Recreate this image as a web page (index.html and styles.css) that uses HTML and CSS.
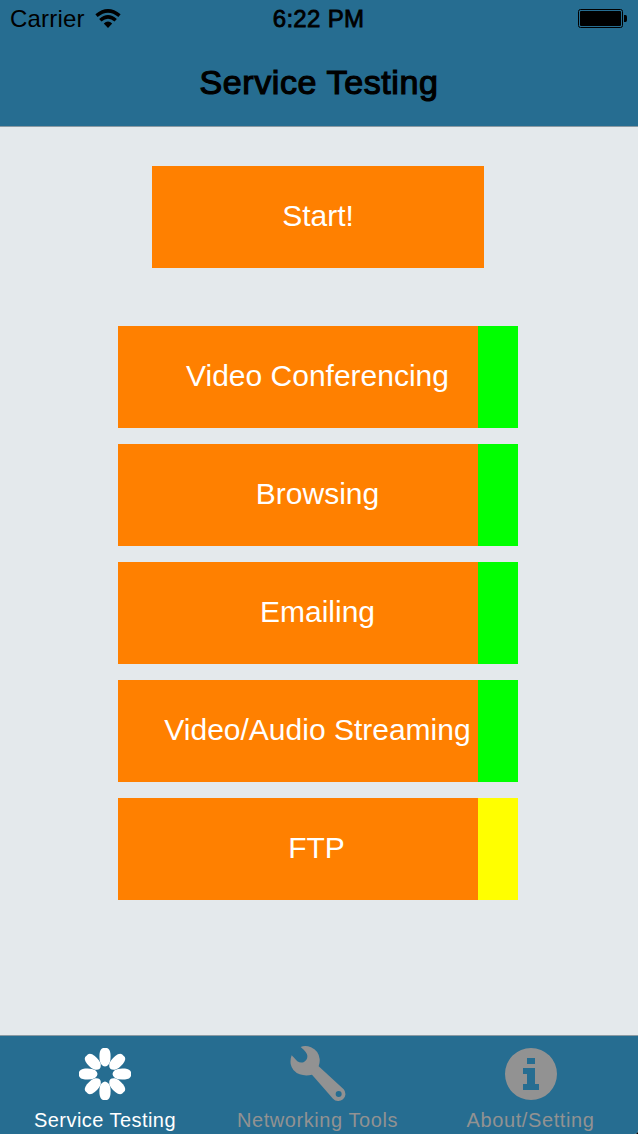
FILE: index.html
```html
<!DOCTYPE html>
<html lang="en">
<head>
<meta charset="utf-8">
<title>Service Testing</title>
<link rel="stylesheet" href="styles.css">
</head>
<body>
<div class="app">
  <header class="header">
    <div class="status">
      <div class="carrier"><span class="carrier-name">Carrier</span>
        <svg class="wifi" width="26" height="20" viewBox="0 0 26 20"><g fill="none" stroke="#000" stroke-width="3.500"><path d="M1.500 6.700Q13 -2.900 24.500 6.700"/><path d="M5.300 11.200Q13 4.500 20.700 11.200"/></g><path d="M8.800 14.600Q13 10.600 17.200 14.600L13 19Z"/></svg>
      </div>
      <div class="time">6:22 PM</div>
      <svg class="battery" width="50" height="20" viewBox="0 0 50 20"><rect x=".5" y=".5" width="44" height="18" rx="2" fill="none" stroke="#000"/><rect x="2" y="2" width="41" height="15" rx="1"/><path d="M46 6h1.500q1.500 0 1.500 2v3q0 2-1.500 2H46Z"/></svg>
    </div>
    <h1 class="title">Service Testing</h1>
  </header>
  <main class="content">
    <button class="start">Start!</button>
    <div class="services">
      <button class="service"><span class="name">Video Conferencing</span></button>
      <button class="service"><span class="name">Browsing</span></button>
      <button class="service"><span class="name">Emailing</span></button>
      <button class="service"><span class="name">Video/Audio Streaming</span></button>
      <button class="service pending"><span class="name">FTP</span></button>
    </div>
  </main>
  <nav class="tabs">
    <a class="tab active">
      <svg class="icon" width="60" height="60" viewBox="-30 -30 60 60" fill="currentColor"><g id="pair"><path id="petal" d="M-2-26H2Q5-25 5.500-20Q6-13 4-10Q2-7.500 0-7.500T-4-10Q-6-13-5.500-20Q-5-25-2-26Z"/><use href="#petal" transform="rotate(180)"/></g><use href="#pair" transform="rotate(45)"/><use href="#pair" transform="rotate(90)"/><use href="#pair" transform="rotate(135)"/></svg>
      <span class="label service-label">Service Testing</span>
    </a>
    <a class="tab">
      <svg class="icon" width="60" height="60" viewBox="23 12 180 180" fill="currentColor"><path fill-rule="evenodd" d="M61 21Q75 15 92 22Q115 32 118 57Q119 69 115 79L190 148A20 20 0 1 1 158 176L95 104Q76 109 58 103Q35 94 31 72Q29 58 34 46L51 64Q61 70 71 66Q82 59 81 47Q80 37 61 21ZM175 153A9 9 0 1 0 175 171A9 9 0 1 0 175 153Z"/></svg>
      <span class="label network-label">Networking Tools</span>
    </a>
    <a class="tab">
      <svg class="icon" width="60" height="60" viewBox="-30 -30 60 60" fill="currentColor"><path fill-rule="evenodd" d="M0-26A26 26 0 1 1 0 26A26 26 0 1 1 0-26ZM-4-16V-10H4V-16ZM-8-6V0H-4V10H-8V16H8V10H4V-6Z"/></svg>
      <span class="label about-label">About/Setting</span>
    </a>
  </nav>
</div>
</body>
</html>
```
FILE: styles.css
```css
* { box-sizing: border-box; }
body { margin: 0; background: #000; font-family: "Liberation Sans", Arial, sans-serif; }
.app { width: 638px; height: 1134px; display: flex; flex-direction: column; background: #e4e9ec; border-bottom-right-radius: 4px; overflow: hidden; }
.header { height: 127px; background: #266d91; border-bottom: 1px solid #8a9aa3; color: #000; }
.status { height: 38px; display: grid; grid-template-columns: 1fr auto 1fr; padding: 0 10px; align-items: center; }
.carrier { display: flex; align-items: center; gap: 10px; }
.carrier-name { font-size: 24px; line-height: 38px; letter-spacing: .2px; }
.wifi { display: block; }
.time { font-size: 24px; line-height: 38px; letter-spacing: .3px; padding-right: 1px; -webkit-text-stroke: .8px #000; }
.battery { justify-self: end; }
.title { margin: 0; height: 88px; text-align: center; font-size: 34px; line-height: 89px; font-weight: 400; letter-spacing: .6px; -webkit-text-stroke: 1.2px #000; }
.content { flex: 1; display: flex; flex-direction: column; align-items: center; padding: 39px 2px 0 0; }
button { border: 0; border-radius: 0; padding: 0 0 2px; margin: 0; background: #ff8000; color: #fff; font: 30px/100px "Liberation Sans", Arial, sans-serif; height: 102px; text-align: center; white-space: nowrap; }
.start { width: 332px; }
.services { margin-top: 58px; display: flex; flex-direction: column; gap: 16px; }
.service { width: 400px; border-right: 40px solid #0f0; padding-left: 39px; }
.pending { border-right-color: #ff0; padding-left: 37px; }
.name { display: block; }
.tabs { height: 99px; border-top: 1px solid #8a9aa3; background: #266d91; display: grid; grid-template-columns: 210px 215px 211px; }
.tab { color: #929292; display: flex; flex-direction: column; align-items: center; padding-top: 8px; }
.active { color: #fff; }
.icon { display: block; }
.label { font-size: 20px; line-height: 23px; margin-top: 5px; letter-spacing: .45px; white-space: nowrap; }
.network-label { letter-spacing: .57px; }
.about-label { letter-spacing: .6px; }
```
